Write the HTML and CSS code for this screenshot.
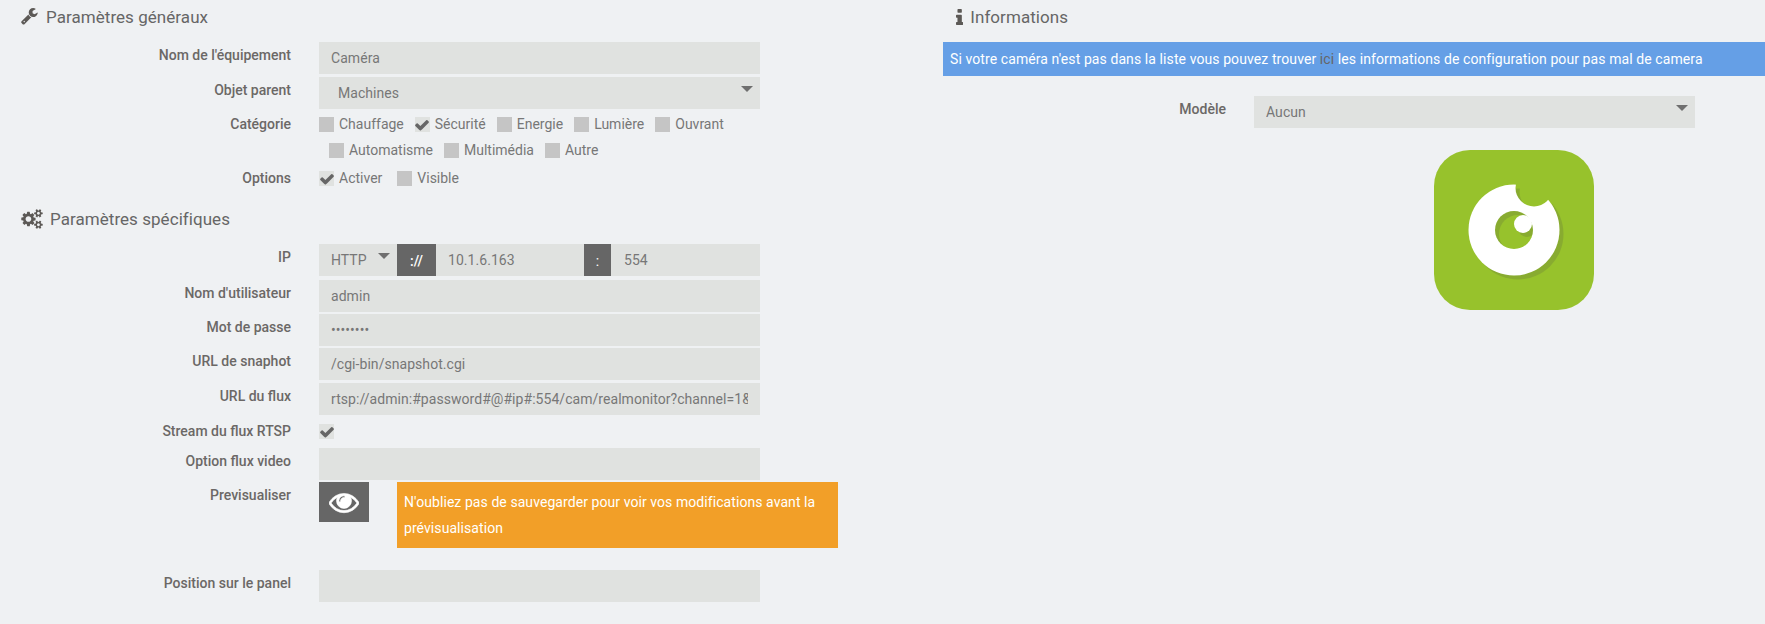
FILE: index.html
```html
<!DOCTYPE html>
<html lang="fr">
<head>
<meta charset="utf-8">
<title>Caméra</title>
<link rel="stylesheet" href="styles.css">
</head>
<body>
<main class="page">
  <section class="col-left">
    <h3 class="heading">
      <svg class="ico ico-wrench" viewBox="0 0 1792 1792"><path d="M384 1344q0-26-19-45t-45-19-45 19-19 45 19 45 45 19 45-19 19-45zm644-420l-682 682q-37 37-90 37-52 0-91-37l-106-108q-38-36-38-90 0-53 38-91l681-681q39 98 114.5 173.5t173.5 114.5zm634-435q0 39-23 106-47 134-164.5 217.5t-258.5 83.5q-185 0-316.5-131.5t-131.5-316.5 131.5-316.5 316.5-131.5q58 0 121.5 16.5t107.5 46.5q16 11 16 28t-16 28l-293 169v224l193 107q5-3 79-48.5t135.5-81 70.5-35.5q15 0 23.5 10t8.5 25z"/></svg>
      Paramètres généraux
    </h3>

    <div class="row gap-3"><label class="lbl">Nom de l'équipement</label><input class="field" type="text" value="Caméra"></div>
    <div class="row"><label class="lbl">Objet parent</label>
      <span class="sel sel-full"><select class="field pad-wide"><option>Machines</option></select></span></div>

    <div class="row row-cat"><span class="lbl">Catégorie</span>
      <div class="checks">
        <div class="line">
          <label class="chk c1"><span class="box"></span>Chauffage</label>
          <label class="chk c1"><span class="box on"><svg class="tick" viewBox="0 0 1792 1792"><path d="M1671 566q0 40-28 68l-724 724-136 136q-28 28-68 28t-68-28l-136-136-362-362q-28-28-28-68t28-68l136-136q28-28 68-28t68 28l294 295 656-657q28-28 68-28t68 28l136 136q28 28 28 68z"/></svg></span>Sécurité</label>
          <label class="chk c1"><span class="box"></span>Energie</label>
          <label class="chk c1"><span class="box"></span>Lumière</label>
          <label class="chk c1"><span class="box"></span>Ouvrant</label>
        </div>
        <div class="line line-2">
          <label class="chk c1"><span class="box"></span>Automatisme</label>
          <label class="chk c1"><span class="box"></span>Multimédia</label>
          <label class="chk c1"><span class="box"></span>Autre</label>
        </div>
      </div>
    </div>

    <div class="row row-opt"><span class="lbl">Options</span>
      <div class="line">
        <label class="chk c2"><span class="box on"><svg class="tick" viewBox="0 0 1792 1792"><path d="M1671 566q0 40-28 68l-724 724-136 136q-28 28-68 28t-68-28l-136-136-362-362q-28-28-28-68t28-68l136-136q28-28 68-28t68 28l294 295 656-657q28-28 68-28t68 28l136 136q28 28 28 68z"/></svg></span>Activer</label>
        <label class="chk c2"><span class="box"></span>Visible</label>
      </div>
    </div>

    <h3 class="heading heading-2">
      <svg class="ico ico-cogs" viewBox="0 0 1920 1792"><path d="M896 896q0-106-75-181t-181-75-181 75-75 181 75 181 181 75 181-75 75-181zm768 512q0-52-38-90t-90-38-90 38-38 90q0 53 37.5 90.5t90.5 37.5 90.5-37.5 37.5-90.5zm0-1024q0-52-38-90t-90-38-90 38-38 90q0 53 37.5 90.5t90.5 37.5 90.5-37.5 37.5-90.5zm-384 421v185q0 10-7 19.5t-16 10.5l-155 24q-11 35-32 76 34 48 90 115 7 11 7 20 0 12-7 19-23 30-82.5 89.5t-78.5 59.5q-11 0-21-7l-115-90q-37 19-77 31-11 108-23 155-7 24-30 24h-186q-11 0-20-7.5t-10-17.5l-23-153q-34-10-75-31l-118 89q-7 7-20 7-11 0-21-8-144-133-144-160 0-9 7-19 10-14 41-53t47-61q-23-44-35-82l-152-24q-10-1-17-9.5t-7-19.5v-185q0-10 7-19.5t16-10.5l155-24q11-35 32-76-34-48-90-115-7-11-7-20 0-12 7-20 22-30 82-89t79-59q11 0 21 7l115 90q34-18 77-32 11-108 23-154 7-24 30-24h186q11 0 20 7.5t10 17.5l23 153q34 10 75 31l118-89q8-7 20-7 11 0 21 8 144 133 144 160 0 8-7 19-12 16-42 54t-45 60q23 48 34 82l152 23q10 2 17 10.5t7 19.5zm640 533v140q0 16-149 31-12 27-30 52 51 113 51 138 0 4-4 7-122 71-124 71-8 0-46-47t-52-68q-20 2-30 2t-30-2q-14 21-52 68t-46 47q-2 0-124-71-4-3-4-7 0-25 51-138-18-25-30-52-149-15-149-31v-140q0-16 149-31 13-29 30-52-51-113-51-138 0-4 4-7 4-2 35-20t59-34 30-16q8 0 46 46.5t52 67.5q20-2 30-2t30 2q51-71 92-112l6-2q4 0 124 70 4 3 4 7 0 25-51 138 17 23 30 52 149 15 149 31zm0-1024v140q0 16-149 31-12 27-30 52 51 113 51 138 0 4-4 7-122 71-124 71-8 0-46-47t-52-68q-20 2-30 2t-30-2q-14 21-52 68t-46 47q-2 0-124-71-4-3-4-7 0-25 51-138-18-25-30-52-149-15-149-31v-140q0-16 149-31 13-29 30-52-51-113-51-138 0-4 4-7 4-2 35-20t59-34 30-16q8 0 46 46.5t52 67.5q20-2 30-2t30 2q51-71 92-112l6-2q4 0 124 70 4 3 4 7 0 25-51 138 17 23 30 52 149 15 149 31z"/></svg>
      Paramètres spécifiques
    </h3>

    <div class="row gap-4"><label class="lbl">IP</label>
      <div class="group">
        <span class="sel sel-proto"><select class="field"><option>HTTP</option></select></span>
        <span class="addon addon-a">://</span>
        <input class="field ip-host" type="text" value="10.1.6.163">
        <span class="addon addon-b">:</span>
        <input class="field ip-port" type="text" value="554">
      </div>
    </div>
    <div class="row gap-2"><label class="lbl">Nom d'utilisateur</label><input class="field" type="text" value="admin"></div>
    <div class="row gap-2"><label class="lbl">Mot de passe</label><input class="field" type="password" value="password"></div>
    <div class="row gap-3"><label class="lbl">URL de snaphot</label><input class="field" type="text" value="/cgi-bin/snapshot.cgi"></div>
    <div class="row gap-3"><label class="lbl">URL du flux</label><input class="field" type="text" value="rtsp://admin:#password#@#ip#:554/cam/realmonitor?channel=1&amp;subtype=0"></div>
    <div class="row gap-4"><span class="lbl">Stream du flux RTSP</span>
      <div class="line"><label class="chk c2"><span class="box on"><svg class="tick" viewBox="0 0 1792 1792"><path d="M1671 566q0 40-28 68l-724 724-136 136q-28 28-68 28t-68-28l-136-136-362-362q-28-28-28-68t28-68l136-136q28-28 68-28t68 28l294 295 656-657q28-28 68-28t68 28l136 136q28 28 28 68z"/></svg></span></label></div>
    </div>
    <div class="row gap-2"><label class="lbl">Option flux video</label><input class="field" type="text"></div>
    <div class="row gap-22"><span class="lbl">Previsualiser</span>
      <button class="eye-btn" type="button"><svg class="eye" viewBox="0 0 1792 1792"><path d="M1664 960q-152-236-381-353 61 104 61 225 0 185-131.5 316.5t-316.5 131.5-316.5-131.5-131.5-316.5q0-121 61-225-229 117-381 353 133 205 333.5 326.5t434.5 121.5 434.5-121.5 333.5-326.5zm-720-384q0-20-14-34t-34-14q-125 0-214.5 89.5t-89.5 214.5q0 20 14 34t34 14 34-14 14-34q0-86 61-147t147-61q20 0 34-14t14-34zm848 384q0 34-20 69-140 230-376.5 368.5t-499.5 138.5-499.5-139-376.5-368q-20-35-20-69t20-69q140-229 376.5-368t499.5-139 499.5 139 376.5 368q20 35 20 69z"/></svg></button>
      <div class="warn">N'oubliez pas de sauvegarder pour voir vos modifications avant la prévisualisation</div>
    </div>
    <div class="row"><label class="lbl">Position sur le panel</label><input class="field" type="text"></div>
  </section>

  <section class="col-right">
    <h3 class="heading heading-info">
      <svg class="ico ico-info" viewBox="576 128 640 1408"><path d="M1216 1344v128q0 26-19 45t-45 19h-512q-26 0-45-19t-19-45v-128q0-26 19-45t45-19h64v-384h-64q-26 0-45-19t-19-45v-128q0-26 19-45t45-19h384q26 0 45 19t19 45v576h64q26 0 45 19t19 45zm-128-1152v192q0 26-19 45t-45 19h-256q-26 0-45-19t-19-45v-192q0-26 19-45t45-19h256q26 0 45 19t19 45z"/></svg>
      Informations
    </h3>
    <div class="notice">Si votre caméra n'est pas dans la liste vous pouvez trouver <a class="notice-link" href="#">ici</a> les informations de configuration pour pas mal de camera</div>
    <div class="row row-model"><label class="lbl lbl-model">Modèle</label>
      <span class="sel sel-full"><select class="field"><option>Aucun</option></select></span></div>
    <svg class="logo" viewBox="0 0 160 160" aria-label="Logo">
      <defs>
        <mask id="ring" maskUnits="userSpaceOnUse" x="0" y="0" width="160" height="160">
          <circle cx="80" cy="80" r="45.5" fill="#fff"/>
          <circle cx="80" cy="80" r="19" fill="#000"/>
          <circle cx="100" cy="38" r="18.5" fill="#000"/>
        </mask>
      </defs>
      <rect width="160" height="160" rx="36" fill="#97c22c"/>
      <g transform="translate(4 4)" fill="#88ab30"><rect width="160" height="160" mask="url(#ring)"/><circle cx="89" cy="74" r="9"/></g>
      <g fill="#fff"><rect width="160" height="160" mask="url(#ring)"/><circle cx="89" cy="74" r="9"/></g>
    </svg>
  </section>
</main>
</body>
</html>
```
FILE: styles.css
```css
* { box-sizing: border-box; }
html, body { margin: 0; padding: 0; }
body {
  background: #eff1f3;
  color: #6b6866;
  font-family: Roboto, "Liberation Sans", sans-serif;
  font-size: 14px;
  line-height: 20px;
}
.page { display: grid; grid-template-columns: 943px 1fr; height: 624px; overflow: hidden; }
.col-left, .col-right { min-width: 0; }

.heading {
  display: flex;
  align-items: center;
  height: 34px;
  margin: 0 0 8px;
  padding-left: 21px;
  font-size: 17px;
  font-weight: 400;
  letter-spacing: .05px;
  color: #666;
}
.heading-2 { margin-top: 11px; }
.heading-info { padding-left: 13px; }
.ico { fill: #5c5956; flex: none; }
.ico-wrench { width: 18px; height: 18px; margin-right: 7px; }
.ico-cogs { width: 22px; height: 20px; margin-right: 7px; }
.ico-info { width: 7.3px; height: 16px; margin-right: 7px; }

.row { display: flex; align-items: flex-start; margin-bottom: 3px; }
.gap-2 { margin-bottom: 2px; }
.gap-3 { margin-bottom: 3px; }
.gap-4 { margin-bottom: 4px; }
.gap-22 { margin-bottom: 22px; }
.lbl {
  flex: none;
  width: 291px;
  margin-right: 28px;
  padding-top: 3px;
  text-align: right;
  font-weight: 500;
  color: #6b6866;
}
.lbl-model { width: 283px; }
.field {
  display: block;
  width: 441px;
  height: 32px;
  padding: 0 12px;
  border: 0;
  border-radius: 0;
  outline: 0;
  background: #e0e2e0;
  color: #777;
  font: inherit;
  letter-spacing: .05px;
  appearance: none;
}
.pad-wide { padding-left: 19px; }

.sel { display: block; position: relative; flex: none; }
.sel::after {
  content: "";
  position: absolute;
  right: 7px;
  top: 9px;
  border-style: solid;
  border-width: 6px 6px 0;
  border-color: #6f6f6f transparent transparent;
  pointer-events: none;
}
.sel-full { width: 441px; }
.sel-proto { width: 78px; }
.sel-proto .field { width: 78px; }

.group { display: flex; width: 441px; height: 32px; }
.addon {
  flex: none;
  display: flex;
  align-items: center;
  justify-content: center;
  padding-top: 2px;
  background: #666;
  color: #fff;
}
.addon-a { width: 39px; font-weight: 500; }
.addon-b { width: 27px; }
.ip-host { width: 148px; }
.ip-port { width: 149px; padding-left: 13px; }

.row-cat { margin-top: -1px; margin-bottom: 2px; }
.row-opt { margin-bottom: 0; }
.checks { display: flex; flex-direction: column; }
.line { display: flex; height: 26px; align-items: center; }
.line-2 { padding-left: 10px; }
.chk { display: flex; align-items: center; color: #777; margin-right: 11px; }
.box {
  display: flex;
  align-items: center;
  justify-content: center;
  flex: none;
  width: 15px;
  height: 15px;
  margin: 1px 5px 0 0;
  background: #c5c5c5;
}
.box.on { background: #e0e2e0; }
.tick { flex: none; width: 16px; height: 16px; fill: #666; }
.c2 { margin-right: 15px; }

.eye-btn {
  display: flex;
  align-items: center;
  justify-content: center;
  flex: none;
  width: 50px;
  height: 40px;
  margin-right: 28px;
  padding: 0;
  border: 0;
  background: #666;
}
.eye { width: 30px; height: 30px; fill: #fff; stroke: #fff; stroke-width: 36px; }
.warn {
  flex: none;
  width: 441px;
  padding: 7px;
  background: #f29f28;
  color: #fff;
  line-height: 26px;
  letter-spacing: .07px;
}

.notice {
  height: 34px;
  padding: 7px;
  background: #659fe6;
  color: #fff;
  letter-spacing: .09px;
  white-space: nowrap;
}
.notice-link { color: #666; text-decoration: none; }
.row-model { margin: 20px 0 22px; }
.logo { display: block; width: 160px; height: 160px; margin-left: 491px; }
```
